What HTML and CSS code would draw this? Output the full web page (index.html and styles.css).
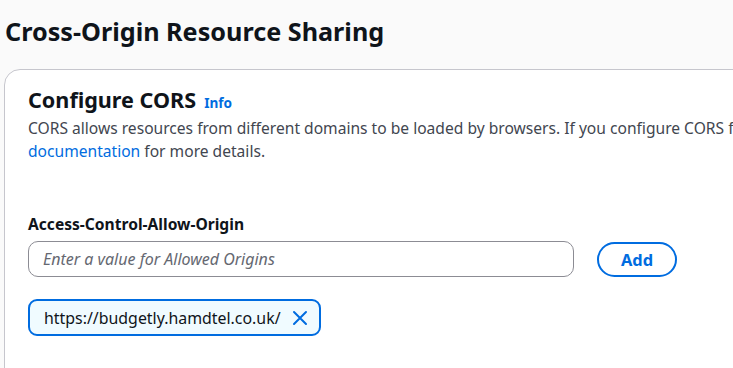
FILE: index.html
```html
<!DOCTYPE html>
<html lang="en">
  <head>
    <meta charset="UTF-8" />
    <title>Cross-Origin Resource Sharing</title>
    <link rel="stylesheet" href="styles.css">
  </head>
  <body>
    <h1 class="page-title">Cross-Origin Resource Sharing</h1>

    <div class="card">
      <div class="card-header">
        <h2>Configure CORS</h2>
        <a class="info-link" href="#">Info</a>
      </div>
      <p class="description">
        CORS allows resources from different domains to be loaded by browsers. If you configure CORS for your API, review the<br>
        <a href="#">documentation</a> for more details.
      </p>

      <div class="field">
        <label for="origin">Access-Control-Allow-Origin</label>
        <div class="field-row">
          <input id="origin" type="text" placeholder="Enter a value for Allowed Origins" />
          <button class="add-btn">Add</button>
        </div>
      </div>

      <div class="tokens">
        <div class="token">
          <span>https://budgetly.hamdtel.co.uk/</span>
          <button class="token-remove" aria-label="Remove">
            <svg width="16" height="16" viewBox="0 0 16 16">
              <path d="M2 2 L14 14 M14 2 L2 14" stroke="currentColor" stroke-width="2" fill="none" stroke-linecap="round" />
            </svg>
          </button>
        </div>
      </div>
    </div>
  </body>
</html>
```

FILE: styles.css
```css
body {
  margin: 0;
  padding: 16px 0 0 5px;
  font-family: "Noto Sans", "Open Sans", sans-serif;
  background: #fafafa;
  color: #0f141a;
  overflow: hidden;
}

.page-title {
  margin: 0 0 23px 0;
  font-size: 25.2px;
  line-height: 30px;
  font-weight: 700;
  color: #0f141a;
  white-space: nowrap;
}

.card {
  margin-left: -1px;
  width: 1000px;
  background: #fff;
  border: 1px solid #c6c6cd;
  border-radius: 16px;
  padding: 15px 24px 80px 23px;
}

.card-header {
  display: flex;
  align-items: baseline;
  gap: 8px;
}

.card-header h2 {
  margin: 0;
  font-size: 21.6px;
  line-height: 29px;
  font-weight: 700;
}

.info-link {
  font-size: 13.6px;
  font-weight: 700;
  color: #006ce0;
  text-decoration: none;
}

.description {
  margin: 3px 0 0 0;
  font-size: 15.6px;
  line-height: 22.5px;
  color: #424650;
  white-space: nowrap;
}

.description a {
  color: #006ce0;
  text-decoration: none;
}

.field {
  margin-top: 52px;
}

.field label {
  display: block;
  font-size: 15.6px;
  line-height: 20px;
  font-weight: 700;
  margin-bottom: 7px;
}

.field-row {
  display: flex;
  align-items: center;
  gap: 23px;
}

.field-row input {
  box-sizing: border-box;
  width: 546px;
  height: 36px;
  border: 1px solid #8c8c94;
  border-radius: 10px;
  padding: 0 14px;
  font-family: inherit;
  font-size: 16px;
  color: #0f141a;
}

.field-row input::placeholder {
  font-style: italic;
  color: #656871;
}

.add-btn {
  box-sizing: border-box;
  width: 80px;
  height: 35px;
  border: 2px solid #006ce0;
  border-radius: 20px;
  background: #fff;
  color: #006ce0;
  font-family: inherit;
  font-size: 16.4px;
  font-weight: 700;
  cursor: pointer;
}

.tokens {
  margin-top: 22px;
  display: flex;
}

.token {
  box-sizing: border-box;
  height: 37px;
  display: flex;
  align-items: center;
  gap: 11px;
  padding: 0 11px 0 14px;
  border: 2px solid #006ce0;
  border-radius: 9px;
  background: #f0fbff;
  font-size: 15.9px;
  color: #0f141a;
}

.token-remove {
  display: flex;
  padding: 0;
  border: none;
  background: none;
  color: #006ce0;
  cursor: pointer;
}
```
